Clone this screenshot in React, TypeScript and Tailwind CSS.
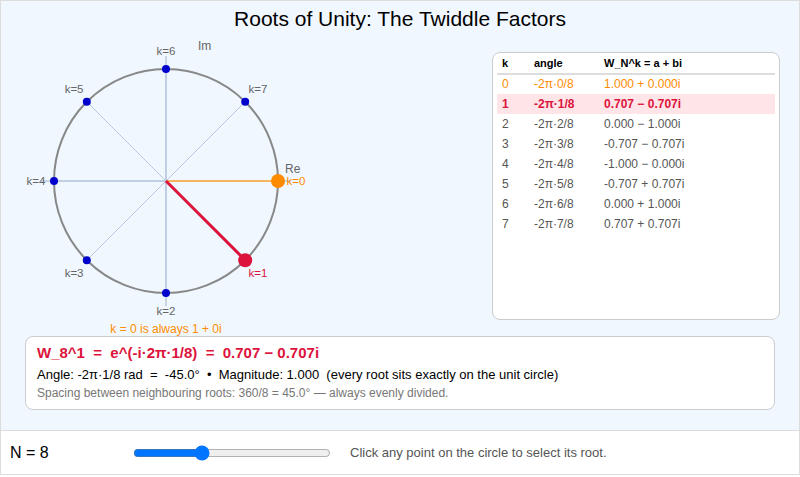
import { useState } from 'react';

const N_DEFAULT = 8;
const R = 112;
const CX = 165;
const CY = 147;

const rows = [
  { k: 0, angle: '-2π·0/8', value: '1.000 + 0.000i' },
  { k: 1, angle: '-2π·1/8', value: '0.707 − 0.707i' },
  { k: 2, angle: '-2π·2/8', value: '0.000 − 1.000i' },
  { k: 3, angle: '-2π·3/8', value: '-0.707 − 0.707i' },
  { k: 4, angle: '-2π·4/8', value: '-1.000 − 0.000i' },
  { k: 5, angle: '-2π·5/8', value: '-0.707 + 0.707i' },
  { k: 6, angle: '-2π·6/8', value: '0.000 + 1.000i' },
  { k: 7, angle: '-2π·7/8', value: '0.707 + 0.707i' },
];

function UnitCircle({ n, selected }: { n: number; selected: number }) {
  const pts = Array.from({ length: n }, (_, k) => {
    const a = (-2 * Math.PI * k) / n;
    // screen y is flipped: Im up
    return { k, x: CX + R * Math.cos(a), y: CY - R * Math.sin(a), lx: CX + 130 * Math.cos(a), ly: CY - 130 * Math.sin(a) };
  });

  return (
    <svg width={330} height={300} overflow="visible" className="shrink-0" style={{ fontFamily: '"Liberation Sans", Arial, sans-serif' }}>
      <line x1={CX - 125} y1={CY} x2={CX + 125} y2={CY} stroke="#c8d4e4" strokeWidth={2} />
      <line x1={CX} y1={CY - 125} x2={CX} y2={CY + 125} stroke="#c8d4e4" strokeWidth={2} />
      <text x={CX + 119} y={CY - 12} fontSize={12} fill="#666" dominantBaseline="central">Re</text>
      <text x={CX + 32} y={CY - 135} fontSize={12} fill="#666" dominantBaseline="central">Im</text>

      {pts.map((p) =>
        p.k === 0 || p.k === selected ? null : (
          <line key={'s' + p.k} x1={CX} y1={CY} x2={p.x} y2={p.y} stroke="#b7c9e2" strokeWidth={1} />
        )
      )}
      <circle cx={CX} cy={CY} r={R} fill="none" stroke="#888" strokeWidth={2} />
      <line x1={CX} y1={CY} x2={pts[0].x} y2={pts[0].y} stroke="#f7b461" strokeWidth={2} />
      <line x1={CX} y1={CY} x2={pts[selected].x} y2={pts[selected].y} stroke="#dc143c" strokeWidth={3} />

      {pts.map((p) => {
        const isZero = p.k === 0;
        const isSel = p.k === selected;
        const fill = isSel ? '#dc143c' : isZero ? '#ff8c00' : '#0000cd';
        return (
          <g key={p.k}>
            <circle cx={p.x} cy={p.y} r={isSel || isZero ? 7 : 4} fill={fill} />
            <text
              x={p.lx}
              y={p.ly}
              fontSize={11.5}
              textAnchor="middle"
              dominantBaseline="central"
              fill={isSel ? '#dc143c' : isZero ? '#ff8c00' : '#666'}
            >
              k={p.k}
            </text>
          </g>
        );
      })}

      <text x={CX} y={CY + 148} fontSize={12} textAnchor="middle" dominantBaseline="central" fill="#ff8c00">
        k = 0 is always 1 + 0i
      </text>
    </svg>
  );
}

export default function App() {
  const [n, setN] = useState(N_DEFAULT);
  const selected = 1;

  return (
    <div
      className="flex h-[475px] w-[800px] flex-col border border-[#dcdcdc] bg-white text-black"
      style={{ fontFamily: '"Liberation Sans", Arial, sans-serif' }}
    >
      <div className="flex flex-1 flex-col bg-[#f0f7ff] pt-[6px]">
        <h1 className="text-center text-[21px] leading-6">Roots of Unity: The Twiddle Factors</h1>

        <div className="mt-[3px] flex items-start">
          <UnitCircle n={n} selected={selected} />
          <div className="ml-auto mr-[19px] mt-[18px] h-[268px] w-[288px] rounded-lg border border-[#ccc] bg-white px-[4px]">
            <table className="w-full border-collapse text-left text-[12px]">
              <thead>
                <tr className="border-b-2 border-[#ddd] text-[11px] font-bold">
                  <th className="w-[32px] pb-[1px] pl-[5px] pt-[2px]">k</th>
                  <th className="w-[70px] pb-[1px] pl-[5px] pt-[2px]">angle</th>
                  <th className="pb-[1px] pl-[5px] pt-[2px]">W_N^k = a + bi</th>
                </tr>
              </thead>
              <tbody>
                {rows.map((r) => {
                  const cls =
                    r.k === selected
                      ? 'bg-[#ffe4e8] font-bold text-[#dc143c]'
                      : r.k === 0
                        ? 'text-[#ff8c00]'
                        : 'text-[#555]';
                  return (
                    <tr key={r.k} className={cls}>
                      <td className="h-[20px] pl-[5px]">{r.k}</td>
                      <td className="pl-[5px]">{r.angle}</td>
                      <td className="pl-[5px]">{r.value}</td>
                    </tr>
                  );
                })}
              </tbody>
            </table>
          </div>
        </div>

        <div className="mx-[24px] mt-[2px] h-[74px] rounded-lg border border-[#ccc] bg-white px-[11px] pt-[6px]">
          <div className="whitespace-pre text-[15px] font-bold leading-5 text-[#dc143c]">
            W_8^1  =  e^(-i·2π·1/8)  =  0.707 − 0.707i
          </div>
          <div className="mt-[4px] whitespace-pre text-[13px] leading-4">
            Angle: -2π·1/8 rad  =  -45.0°  •  Magnitude: 1.000  (every root sits exactly on the unit circle)
          </div>
          <div className="mt-[2px] text-[12px] leading-4 text-[#777]">
            Spacing between neighbouring roots: 360/8 = 45.0° — always evenly divided.
          </div>
        </div>
      </div>

      <div className="flex h-[44px] items-center border-t border-[#dcdcdc] bg-white px-[9px]">
        <span className="w-[123px] text-[16px]">N = {n}</span>
        <input
          type="range"
          min={2}
          max={20}
          value={n}
          onChange={(e) => setN(Number(e.target.value))}
          className="w-[198px]"
        />
        <span className="ml-[19px] text-[13px] text-[#555]">Click any point on the circle to select its root.</span>
      </div>
    </div>
  );
}
